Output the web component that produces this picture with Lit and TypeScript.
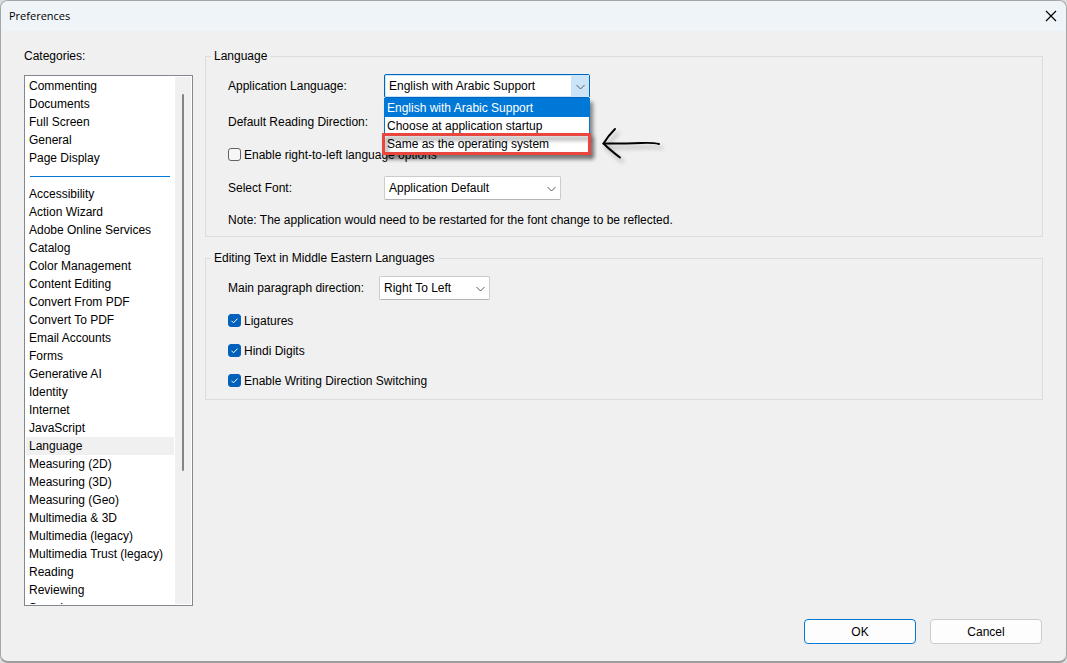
import { LitElement, html, css, svg } from "lit";
import { customElement, property, state } from "lit/decorators.js";
import { classMap } from "lit/directives/class-map.js";

const FAVOURITES = ["Commenting", "Documents", "Full Screen", "General", "Page Display"];

const CATEGORIES = [
  "Accessibility", "Action Wizard", "Adobe Online Services", "Catalog", "Color Management",
  "Content Editing", "Convert From PDF", "Convert To PDF", "Email Accounts", "Forms",
  "Generative AI", "Identity", "Internet", "JavaScript", "Language", "Measuring (2D)",
  "Measuring (3D)", "Measuring (Geo)", "Multimedia & 3D", "Multimedia (legacy)",
  "Multimedia Trust (legacy)", "Reading", "Reviewing", "Search",
];

const LANGUAGES = [
  "English with Arabic Support",
  "Choose at application startup",
  "Same as the operating system",
];

@customElement("pref-categories")
class PrefCategories extends LitElement {
  @state() selected = "Language";

  static styles = css`
    :host { display: flex; flex-direction: column; min-height: 0; }
    .title { line-height: 16px; margin: 0 0 11px; font-weight: normal; font-size: inherit; }
    .box {
      flex: 1; min-height: 0; display: flex; box-sizing: border-box;
      border: 1px solid #828790; background: #fff; padding: 1px;
    }
    .list { flex: 1; min-width: 0; margin: 0; padding: 0; list-style: none; overflow: hidden; }
    .item {
      display: block; width: 100%; height: 18px; padding: 0 0 0 3px; border: 0;
      background: none; font: inherit; line-height: 18px; color: #000;
      text-align: left; white-space: nowrap;
    }
    .selected { background: #f0f0f0; }
    .rule { height: 18px; padding: 0 4px; display: flex; align-items: center; }
    .line { flex: 1; height: 1px; background: #0078d7; }
    .track {
      flex: none; width: 16px; margin-left: 1px; background: #f0f0f0;
      display: flex; justify-content: center; padding-top: 17px; box-sizing: border-box;
    }
    .thumb { width: 2px; height: 74%; border-radius: 1px; background: #858585; }
  `;

  item(name: string) {
    return html`<li><button
      class=${classMap({ item: true, selected: name === this.selected })}
      @click=${() => (this.selected = name)}>${name}</button></li>`;
  }

  render() {
    return html`
      <h2 class="title">Categories:</h2>
      <div class="box">
        <ul class="list">
          ${FAVOURITES.map((n) => this.item(n))}
          <li class="rule" role="separator"><span class="line"></span></li>
          ${CATEGORIES.map((n) => this.item(n))}
        </ul>
        <div class="track"><div class="thumb"></div></div>
      </div>`;
  }
}

@customElement("pref-select")
class PrefSelect extends LitElement {
  @property() label = "";
  @property({ type: Array }) options: string[] = [];
  @property({ type: Boolean, reflect: true }) open = false;

  static styles = css`
    :host { display: flex; align-items: center; }
    .label { flex: none; width: var(--label-width, 156px); white-space: nowrap; }
    .field { position: relative; display: grid; width: var(--field-width, 177px); height: 24px; }
    .select {
      grid-area: 1 / 1; appearance: none; width: 100%; height: 24px; margin: 0;
      padding: 0 24px 0 4px; border: 1px solid #ccc; border-bottom-color: #b4b4b4;
      border-radius: 2px; background: #fff; font: inherit; color: #000; outline: none;
    }
    .chevron {
      grid-area: 1 / 1; justify-self: end; align-self: center; width: 18px; height: 22px;
      fill: none; stroke: #5a5a5a; pointer-events: none; margin-right: 1px;
    }
    :host([open]) .select { border-color: #0067c0; box-shadow: inset 0 0 0 1px #cce4f7; }
    :host([open]) .chevron { background: #cce4f7; }
    .popup {
      position: absolute; top: 100%; left: 0; right: 0; margin: 0; padding: 0;
      box-sizing: border-box; list-style: none; background: #fff; border: 1px solid #0078d7;
      box-shadow: 3px 4px 4px rgba(0, 0, 0, 0.45); z-index: 1;
    }
    .option { height: 18px; line-height: 18px; padding-left: 2px; white-space: nowrap; }
    .active { background: #0078d7; color: #fff; }
    .callout {
      position: absolute; z-index: 2; top: 59px; left: -2px; right: -1px; height: 22px;
      box-sizing: border-box; border: 3px solid #ea4640;
      filter: drop-shadow(3px 4px 2px rgba(0, 0, 0, 0.4));
    }
    .arrow {
      position: absolute; z-index: 2; left: 215px; top: 51px; width: 66px; height: 40px;
      fill: none; stroke: #000; stroke-linecap: round;
      filter: drop-shadow(3px 4px 2px rgba(0, 0, 0, 0.3));
    }
  `;

  render() {
    return html`
      <label class="label" for="field">${this.label}</label>
      <div class="field">
        <select class="select" id="field">${this.options.map((o) => html`<option>${o}</option>`)}</select>
        <svg class="chevron" viewBox="0 0 18 22"><path d="M5.500 10l4 4 4-4" /></svg>
        ${this.open ? html`
          <ul class="popup" role="listbox">
            ${this.options.map((o, i) => html`
              <li role="option" class=${classMap({ option: true, active: i === 0 })}>${o}</li>`)}
          </ul>
          <div class="callout"></div>
          <svg class="arrow" viewBox="0 0 66 40">
            <path stroke-width="2" d="M16 4Q9 11 4.500 18.500Q11 25 21 32.500" />
            <path stroke-width="2" d="M4.500 18.500Q26 18.600 42 18Q54 17.500 60 19" />
          </svg>` : ""}
      </div>`;
  }
}

@customElement("pref-check")
class PrefCheck extends LitElement {
  @property() label = "";
  @property({ type: Boolean }) checked = false;

  static styles = css`
    :host { display: flex; align-items: center; height: 24px; }
    .row { display: flex; align-items: center; gap: 3px; }
    .mark { display: grid; padding-bottom: 2px; }
    .input {
      grid-area: 1 / 1; appearance: none; width: 13px; height: 13px; margin: 0;
      box-sizing: border-box; border: 1px solid #626262; border-radius: 3px; background: #f6f6f6;
    }
    .input:checked { background: #0060ba; border-color: #0060ba; }
    .tick { grid-area: 1 / 1; width: 13px; height: 13px; fill: none; stroke: #fff; pointer-events: none; }
  `;

  render() {
    return html`
      <label class="row">
        <span class="mark">
          <input class="input" type="checkbox" .checked=${this.checked} />
          ${this.checked ? html`<svg class="tick" viewBox="0 0 13 13">${svg`<path d="M3.500 6.800l2 2 4-4.200" />`}</svg>` : ""}
        </span>
        <span>${this.label}</span>
      </label>`;
  }
}

@customElement("app-root")
class AppRoot extends LitElement {
  static styles = css`
    :host { display: block; height: 100vh; background: #dcdcdc; }
    .window {
      display: flex; flex-direction: column; height: 100%; box-sizing: border-box;
      border: 1px solid #a3a5a7; border-bottom: 2px solid #9d9d9d; border-radius: 8px; overflow: hidden;
      background: #f0f0f0; color: #000; font: 12px/16px "Liberation Sans", Arial, sans-serif;
    }
    .titlebar {
      display: flex; align-items: center; justify-content: space-between; flex: none;
      height: 30px; padding: 0 7px 0 8px; background: #eff4f9;
    }
    .caption { margin: 0; font: 11px/16px "Open Sans", "Noto Sans", sans-serif; }
    .close { display: grid; place-items: center; width: 16px; height: 16px; padding: 0; border: 0; background: none; }
    .cross { width: 12px; height: 12px; fill: none; stroke: #000; stroke-width: 1.2; }
    .content {
      flex: 1; min-height: 0; display: grid; grid-template-columns: 169px minmax(0, 1fr);
      gap: 12px; padding: 17px 23px 0;
    }
    .panel { display: flex; flex-direction: column; gap: 13px; }
    .group { margin: 0; padding: 10px 22px 6px; border: 1px solid #dcdcdc; min-width: 0; }
    .legend { padding: 0 3px; margin-left: -17px; line-height: 16px; }
    .rows { display: flex; flex-direction: column; gap: 9px; }
    .language { --field-width: 206px; margin-bottom: 3px; }
    .direction { --label-width: 151px; --field-width: 111px; }
    .text { height: 24px; line-height: 24px; }
    .note { margin: 0; padding: 3px 0 2px; }
    .checks { display: flex; flex-direction: column; gap: 6px; }
    .footer { flex: none; display: flex; justify-content: flex-end; gap: 14px; padding: 13px 24px 17px; }
    .button {
      width: 112px; height: 25px; padding: 0; border: 1px solid #ccc; border-radius: 4px;
      background: #fdfdfd; font: inherit; color: #000;
    }
    .primary { border-color: #0078d4; }
  `;

  render() {
    return html`
      <div class="window">
        <header class="titlebar">
          <h1 class="caption">Preferences</h1>
          <button class="close" aria-label="Close">
            <svg class="cross" viewBox="0 0 12 12"><path d="M1 1l10 10M11 1L1 11" /></svg>
          </button>
        </header>
        <main class="content">
          <pref-categories></pref-categories>
          <div class="panel">
            <fieldset class="group">
              <legend class="legend">Language</legend>
              <div class="rows">
                <pref-select class="language" label="Application Language:" .options=${LANGUAGES} open></pref-select>
                <div class="text">Default Reading Direction:</div>
                <pref-check label="Enable right-to-left language options"></pref-check>
                <pref-select label="Select Font:" .options=${["Application Default"]}></pref-select>
                <p class="note">Note: The application would need to be restarted for the font change to be reflected.</p>
              </div>
            </fieldset>
            <fieldset class="group">
              <legend class="legend">Editing Text in Middle Eastern Languages</legend>
              <div class="rows">
                <pref-select class="direction" label="Main paragraph direction:" .options=${["Right To Left"]}></pref-select>
                <div class="checks">
                  <pref-check label="Ligatures" checked></pref-check>
                  <pref-check label="Hindi Digits" checked></pref-check>
                  <pref-check label="Enable Writing Direction Switching" checked></pref-check>
                </div>
              </div>
            </fieldset>
          </div>
        </main>
        <footer class="footer">
          <button class="button primary">OK</button>
          <button class="button">Cancel</button>
        </footer>
      </div>`;
  }
}
